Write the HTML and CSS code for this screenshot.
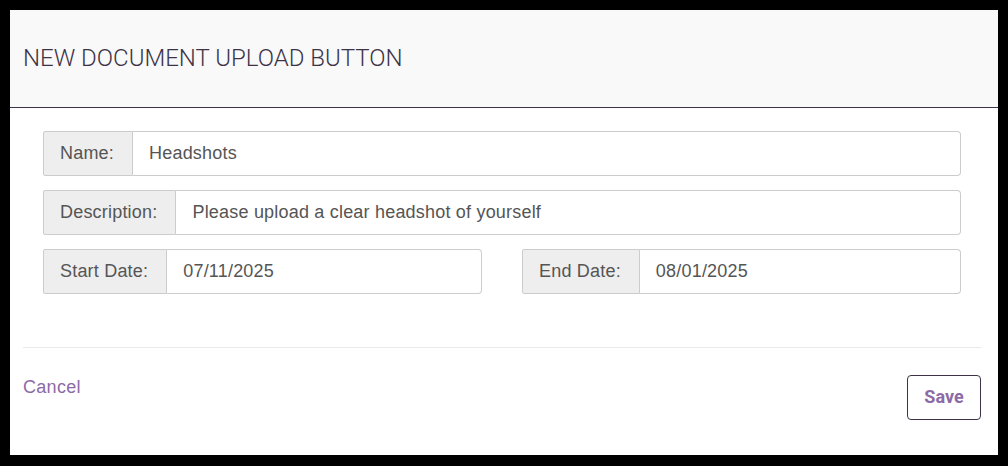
FILE: index.html
```html
<!DOCTYPE html>
<html>
<head>
<meta charset="utf-8">
<link rel="stylesheet" href="styles.css">
</head>
<body>
<div class="modal">
  <div class="modal-header">
    <h1 class="modal-title">NEW DOCUMENT UPLOAD BUTTON</h1>
  </div>
  <div class="modal-body">
    <div class="input-group">
      <span class="addon">Name:</span>
      <span class="field">Headshots</span>
    </div>
    <div class="input-group">
      <span class="addon">Description:</span>
      <span class="field">Please upload a clear headshot of yourself</span>
    </div>
    <div class="date-row">
      <div class="input-group">
        <span class="addon">Start Date:</span>
        <span class="field">07/11/2025</span>
      </div>
      <div class="input-group">
        <span class="addon">End Date:</span>
        <span class="field">08/01/2025</span>
      </div>
    </div>
  </div>
  <div class="modal-footer">
    <a class="cancel">Cancel</a>
    <button class="save">Save</button>
  </div>
</div>
</body>
</html>
```

FILE: styles.css
```css
html, body {
  margin: 0;
  padding: 0;
  background: #000;
}
body {
  padding: 10px 10px 11px 10px;
  height: 466px;
  box-sizing: border-box;
}
.modal {
  background: #fff;
  height: 445px;
  display: flex;
  flex-direction: column;
}
.modal-header {
  background: #f9f9f9;
  height: 98px;
  box-sizing: border-box;
  border-bottom: 1px solid #3d3347;
  display: flex;
  align-items: center;
  padding: 0 13px 2px;
}
.modal-title {
  margin: 0;
  font-family: Roboto, "Liberation Sans", sans-serif;
  font-weight: 300;
  font-size: 24px;
  color: #3d3347;
  letter-spacing: 0;
}
.modal-body {
  padding: 23px 37px 0 33px;
  display: flex;
  flex-direction: column;
  gap: 14px;
  height: 239px;
  box-sizing: border-box;
}
.input-group {
  display: flex;
  height: 45px;
  font-family: "Liberation Sans", Arial, sans-serif;
  font-size: 18px;
  letter-spacing: 0.2px;
  color: #555;
}
.addon {
  display: flex;
  align-items: center;
  padding: 0 18px 0 16px;
  background: #eee;
  border: 1px solid #ccc;
  border-radius: 2px 0 0 2px;
  white-space: nowrap;
}
.field {
  flex: 1;
  display: flex;
  align-items: center;
  padding: 0 16px;
  border: 1px solid #ccc;
  border-left: none;
  border-radius: 0 4px 4px 0;
  background: #fff;
}
.date-row {
  display: grid;
  grid-template-columns: 1fr 1fr;
  gap: 40px;
}
.modal-footer {
  margin: 0 17px 0 13px;
  border-top: 1px solid #e9e9e9;
  padding-top: 27px;
  display: flex;
  justify-content: space-between;
  align-items: flex-start;
}
.cancel {
  font-family: "Liberation Sans", Arial, sans-serif;
  font-size: 18px;
  letter-spacing: 0.3px;
  color: #8d6aa5;
  margin-top: 2px;
}
.save {
  width: 74px;
  height: 45px;
  background: #fff;
  border: 1px solid #3d3347;
  border-radius: 4px;
  font-family: Roboto, "Liberation Sans", sans-serif;
  font-weight: 700;
  font-size: 18px;
  color: #8d6aa5;
  padding: 0 0 2px;
}
```
